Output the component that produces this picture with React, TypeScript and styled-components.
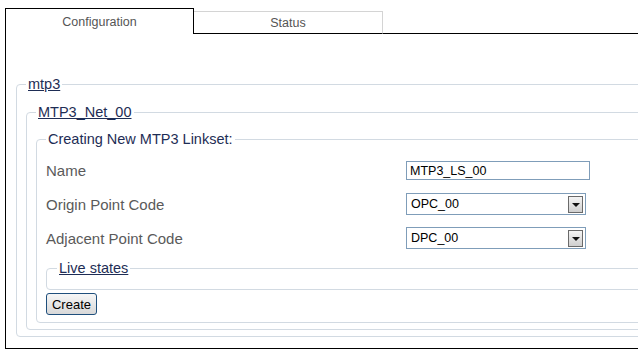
import { FC } from "react";
import styled, { createGlobalStyle } from "styled-components";

const GlobalStyle = createGlobalStyle`
    body {
        margin: 0;
        background: #ffffff;
        overflow: hidden;
        font-family: "Liberation Sans", Arial, sans-serif;
    }
`;

const Page = styled.div`
    width: 760px;
    padding: 8px 0 0 5px;
`;

const TabBar = styled.div`
    display: flex;
    align-items: flex-end;
`;

const Tab = styled.div<{ active?: boolean }>`
    width: 189px;
    height: ${(p) => (p.active ? "26px" : "23px")};
    box-sizing: border-box;
    display: flex;
    justify-content: center;
    align-items: center;
    font-size: 12.5px;
    color: #555;
    border-top: 1px solid ${(p) => (p.active ? "#000" : "#d4d4d4")};
    border-left: ${(p) => (p.active ? "1px solid #000" : "none")};
    border-right: 1px solid ${(p) => (p.active ? "#000" : "#d4d4d4")};
    border-bottom: ${(p) => (p.active ? "none" : "1px solid #000")};
    padding-top: ${(p) => (p.active ? "0" : "1px")};
`;

const TabFiller = styled.div`
    flex: 1;
    height: 23px;
    border-bottom: 1px solid #000;
`;

const Panel = styled.div`
    border: 1px solid #000;
    border-top: none;
    padding: 42px 0 11px 10px;
`;

const Group = styled.fieldset<{ pad: string }>`
    margin: 0;
    padding: ${(p) => p.pad};
    border: 1px solid #d2dae2;
    border-radius: 4px;
    min-inline-size: 0;
`;

const Legend = styled.legend<{ link?: boolean }>`
    padding: 0 2px;
    font-size: 14.5px;
    line-height: 17px;
    color: #1e2d55;
    text-decoration: ${(p) => (p.link ? "underline" : "none")};
`;

const Form = styled.div`
    display: grid;
    grid-template-columns: 360px 1fr;
    grid-auto-rows: 34px;
    align-items: center;
`;

const Label = styled.span`
    font-size: 15px;
    color: #5a5a5a;
`;

const TextBox = styled.input`
    width: 184px;
    height: 19px;
    box-sizing: border-box;
    margin: 1px 0 0;
    padding: 0 3px;
    border: 1px solid #7f9db9;
    font-family: "Liberation Sans", Arial, sans-serif;
    font-size: 12.5px;
    color: #000;
    outline: none;
`;

const SelectBox = styled.div`
    width: 180px;
    height: 22px;
    box-sizing: border-box;
    border: 1px solid #7f9db9;
    display: flex;
    align-items: center;
    justify-content: space-between;
    padding: 0 2px 0 4px;
    font-size: 12.5px;
    color: #000;
`;

const DropButton = styled.span`
    width: 15px;
    height: 17px;
    box-sizing: border-box;
    border: 1px solid #6a6a6a;
    background: linear-gradient(#f4f4f4, #cfcfcf);
    display: flex;
    align-items: center;
    justify-content: center;

    &::after {
        content: "";
        border-left: 4px solid transparent;
        border-right: 4px solid transparent;
        border-top: 4px solid #111;
        margin-top: 1px;
    }
`;

const Button = styled.button`
    margin-top: 3px;
    width: 51px;
    height: 22px;
    padding: 0;
    border: 1px solid #1f4f7c;
    border-radius: 3px;
    background: linear-gradient(#f6f6f6, #d8d8d8);
    font-family: "Liberation Sans", Arial, sans-serif;
    font-size: 13px;
    color: #000;
`;

const LiveStates = styled(Group)`
    margin-top: 5px;
`;

const Select: FC<{ value: string }> = ({ value }) => (
    <SelectBox>
        <span>{value}</span>
        <DropButton />
    </SelectBox>
);

export default function App() {
    return (
        <Page>
            <GlobalStyle />
            <TabBar>
                <Tab active>Configuration</Tab>
                <Tab>Status</Tab>
                <TabFiller />
            </TabBar>
            <Panel>
                <Group pad="11px 0 6px 9px">
                    <Legend link>mtp3</Legend>
                    <Group pad="10px 0 6px 9px">
                        <Legend link>MTP3_Net_00</Legend>
                        <Group pad="5px 0 7px 9px">
                            <Legend>Creating New MTP3 Linkset:</Legend>
                            <Form>
                                <Label>Name</Label>
                                <div>
                                    <TextBox defaultValue="MTP3_LS_00" />
                                </div>
                                <Label>Origin Point Code</Label>
                                <Select value="OPC_00" />
                                <Label>Adjacent Point Code</Label>
                                <Select value="DPC_00" />
                            </Form>
                            <LiveStates pad="0 0 12px 10px">
                                <Legend link>Live states</Legend>
                            </LiveStates>
                            <Button>Create</Button>
                        </Group>
                    </Group>
                </Group>
            </Panel>
        </Page>
    );
}
